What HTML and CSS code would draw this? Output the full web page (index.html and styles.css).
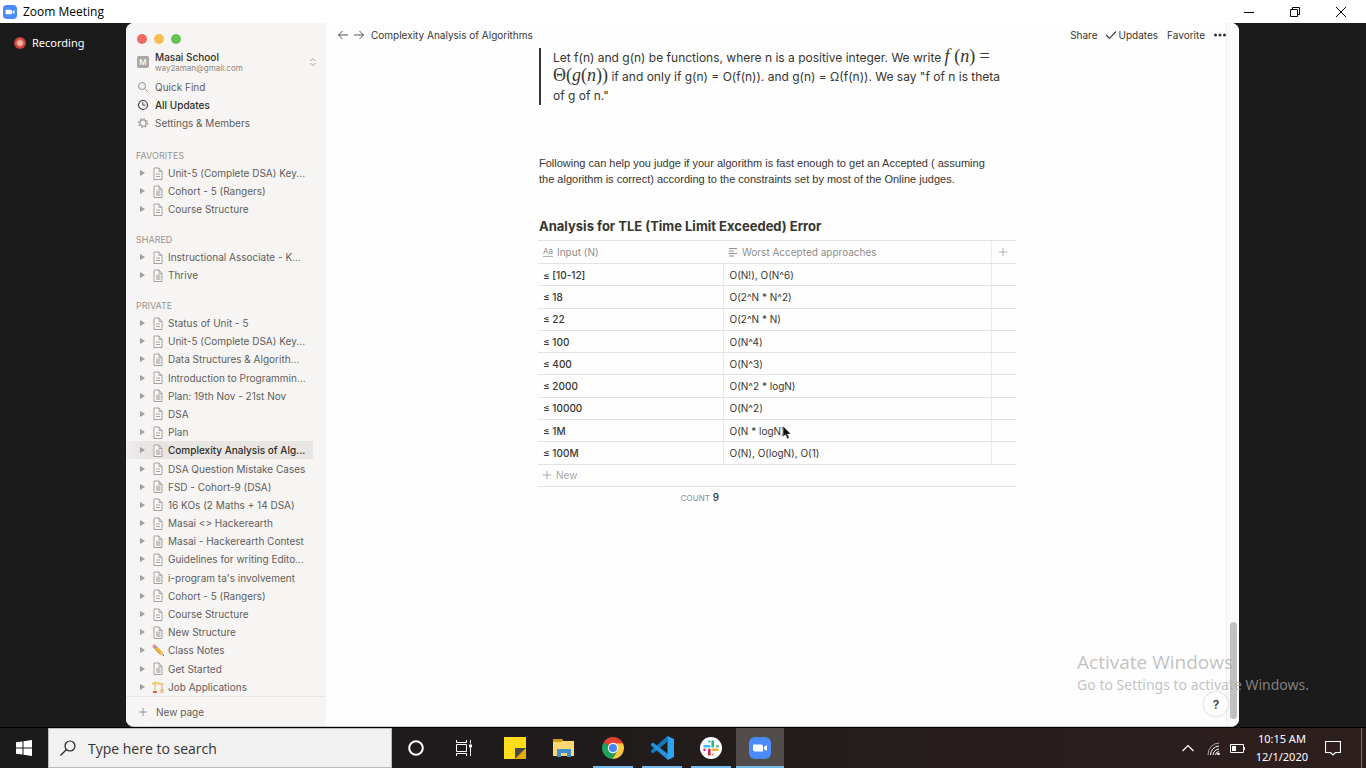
FILE: index.html
```html
<!DOCTYPE html>
<html lang="en">
<head>
<meta charset="utf-8">
<title>Zoom Meeting</title>
<link rel="stylesheet" href="styles.css">
<script src="app.js" defer></script>
</head>
<body>
<svg class="defs" aria-hidden="true">
  <symbol id="doc" viewBox="0 0 10 13"><path d="M1 1h5l3 3.500v8H1z" fill="#fbfaf9" stroke="#a3a19d"/><path d="M6 1v3.500h3M3 7h4M3 9.500h4" fill="none" stroke="#a3a19d"/></symbol>
  <symbol id="docfull" viewBox="0 0 10 13"><path d="M1 1h5l3 3.500v8H1z" fill="#fbfaf9" stroke="#a3a19d"/><path d="M6 1v3.500h3" fill="none" stroke="#a3a19d"/><path d="M3 5.500h4.500V11H3z" fill="#c9c6c2"/></symbol>
  <symbol id="pencil" viewBox="0 0 12 12"><path d="M0 2.500L2.500 0l2.800 2.800-2.500 2.500z" fill="#e58fa0"/><path d="M2.600 5.100l2.500-2.500L10.500 8 8 10.500z" fill="#f5b82e"/><path d="M2 4.500L4.500 2l1 1L3 5.500z" fill="#9a9da0"/><path d="M3.800 5.800L8.600 10.500" stroke="#d18b1c" fill="none"/><path d="M8 10.500L10.500 8l1.500 4z" fill="#e0bd84"/><path d="M10.800 11.400l.8-.8.4 1.400z" fill="#333"/></symbol>
  <symbol id="crane" viewBox="0 0 12 12"><path d="M0 3h12M3 1v10M3 1l8 2M3 1L0 3" stroke="#ecc765" stroke-width="1.200" fill="none"/><path d="M10 3v6M8 11h4" stroke="#d7a76a" fill="none"/><path d="M1 11h4" stroke="#d9634c" stroke-width="2"/><path d="M8.500 8h3v2h-3z" fill="#e6b584"/></symbol>
  <symbol id="zoomcam" viewBox="0 0 22 22"><rect width="22" height="22" rx="6" fill="#4a8cff"/><path d="M4 7.500h8q2 0 2 2v5H6q-2 0-2-2zM15 10l3-2v6l-3-2z" fill="#fff"/></symbol>
</svg>

<header class="titlebar">
  <svg class="title-logo"><use href="#zoomcam"/></svg>
  <span class="title">Zoom Meeting</span>
  <button class="win-btn" aria-label="Minimize"><svg viewBox="0 0 12 12"><path d="M1 6.500h10" stroke="#000"/></svg></button>
  <button class="win-btn" aria-label="Restore"><svg viewBox="0 0 12 12"><path d="M1.500 3.500h7v7h-7zM3.500 3.500v-2h7v7h-2" fill="none" stroke="#000"/></svg></button>
  <button class="win-btn" aria-label="Close"><svg viewBox="0 0 12 12"><path d="M1 1l10 10M11 1L1 11" stroke="#000"/></svg></button>
</header>

<div class="stage">
  <div class="side-left"><span class="rec-dot"></span><span>Recording</span></div>

  <div class="window">
    <aside class="sidebar">
      <div class="lights"><i class="red"></i><i class="yellow"></i><i class="green"></i></div>
      <button class="workspace">
        <span class="badge">M</span>
        <span class="ws-text"><b>Masai School</b><small>way2aman@gmail.com</small></span>
        <svg class="updown" viewBox="0 0 8 10"><path d="M1.500 4L4 1.500 6.500 4M1.500 6L4 8.500 6.500 6" fill="none" stroke="#a5a3a0"/></svg>
      </button>
      <nav class="nav">
        <a href="#"><svg viewBox="0 0 12 12"><circle cx="5" cy="5" r="3.500" fill="none" stroke="#96948f"/><path d="M7.500 7.500l3.500 3.500" stroke="#96948f"/></svg>Quick Find</a>
        <a href="#" class="strong"><svg viewBox="0 0 12 12"><circle cx="6" cy="6" r="4.500" fill="none" stroke="#444" stroke-width="1.200"/><path d="M5.800 3.200v3h2.700" fill="none" stroke="#444"/></svg>All Updates</a>
        <a href="#"><svg viewBox="0 0 12 12"><circle cx="6" cy="6" r="3.200" fill="none" stroke="#96948f" stroke-width="1.200"/><circle cx="6" cy="6" r="4.500" fill="none" stroke="#96948f" stroke-width="1.200" stroke-dasharray="1.500 2.034"/></svg>Settings &amp; Members</a>
      </nav>
      <h2>FAVORITES</h2>
      <ul class="pages" data-pages="doc:Unit-5 (Complete DSA) Key...|docfull:Cohort - 5 (Rangers)|doc:Course Structure"></ul>
      <h2>SHARED</h2>
      <ul class="pages" data-pages="doc:Instructional Associate - K...|docfull:Thrive"></ul>
      <h2>PRIVATE</h2>
      <ul class="pages fill" data-pages="doc:Status of Unit - 5|doc:Unit-5 (Complete DSA) Key...|docfull:Data Structures &amp; Algorith...|doc:Introduction to Programmin...|docfull:Plan: 19th Nov - 21st Nov|doc:DSA|doc:Plan|docfull:Complexity Analysis of Alg...|doc:DSA Question Mistake Cases|docfull:FSD - Cohort-9 (DSA)|doc:16 KOs (2 Maths + 14 DSA)|doc:Masai &lt;&gt; Hackerearth|docfull:Masai - Hackerearth Contest|doc:Guidelines for writing Edito...|docfull:i-program ta's involvement|doc:Cohort - 5 (Rangers)|doc:Course Structure|docfull:New Structure|pencil:Class Notes|docfull:Get Started|crane:Job Applications"></ul>
      <button class="newpage"><svg viewBox="0 0 10 10"><path d="M5 1v8M1 5h8" stroke="#96948f"/></svg>New page</button>
    </aside>

    <main class="main">
      <div class="topbar">
        <button aria-label="Back"><svg viewBox="0 0 12 10"><path d="M11 5H1.500M5.500 1l-4 4 4 4" fill="none" stroke="#55534f"/></svg></button>
        <button aria-label="Forward"><svg viewBox="0 0 12 10"><path d="M1 5h9.500M6.500 1l4 4-4 4" fill="none" stroke="#55534f"/></svg></button>
        <span class="crumb">Complexity Analysis of Algorithms</span>
        <button>Share</button>
        <button class="updates"><svg viewBox="0 0 12 10"><path d="M1 5l3.500 3.500L11 1.500" fill="none" stroke="#444" stroke-width="1.200"/></svg>Updates</button>
        <button class="fav">Favorite</button>
        <button aria-label="More"><svg viewBox="0 0 12 10"><g fill="#333"><circle cx="1.500" cy="5" r="1.500"/><circle cx="6" cy="5" r="1.500"/><circle cx="10.500" cy="5" r="1.500"/></g></svg></button>
      </div>
      <article class="doc">
        <blockquote>Let f(n) and g(n) be functions, where n is a positive integer. We write <span class="math"><i>f</i> (<i>n</i>) =</span><br><span class="math">Θ(<i>g</i>(<i>n</i>))</span> if and only if g(n) = O(f(n)). and g(n) = Ω(f(n)). We say "f of n is theta<br>of g of n."</blockquote>
        <p>Following can help you judge if your algorithm is fast enough to get an Accepted ( assuming<br>the algorithm is correct) according to the constraints set by most of the Online judges.</p>
        <h1>Analysis for TLE (Time Limit Exceeded) Error</h1>
        <table>
          <colgroup><col class="c1"><col><col class="c3"></colgroup>
          <thead><tr>
            <th><span class="th"><span class="aa">Aa</span>Input (N)</span></th>
            <th><span class="th"><svg viewBox="0 0 10 10"><path d="M1 1.500h8M1 4h5M1 6.500h8M1 9h5" stroke="#8f8d89"/></svg>Worst Accepted approaches</span></th>
            <th class="add"><button aria-label="Add column"><svg viewBox="0 0 8 8"><path d="M4 0v8M0 4h8" stroke="#b3b1ae"/></svg></button></th>
          </tr></thead>
          <tbody>
            <tr><td>≤ [10-12]</td><td>O(N!), O(N^6)</td><td></td></tr>
            <tr><td>≤ 18</td><td>O(2^N * N^2)</td><td></td></tr>
            <tr><td>≤ 22</td><td>O(2^N * N)</td><td></td></tr>
            <tr><td>≤ 100</td><td>O(N^4)</td><td></td></tr>
            <tr><td>≤ 400</td><td>O(N^3)</td><td></td></tr>
            <tr><td>≤ 2000</td><td>O(N^2 * logN)</td><td></td></tr>
            <tr><td>≤ 10000</td><td>O(N^2)</td><td></td></tr>
            <tr><td>≤ 1M</td><td><span class="pointed">O(N * logN)<svg class="cursor" viewBox="0 0 10 15"><path d="M1 1v11l2.500-2.300L5.300 14l2-.9-1.800-4H9z" fill="#111" stroke="#eee" stroke-width=".6"/></svg></span></td><td></td></tr>
            <tr><td>≤ 100M</td><td>O(N), O(logN), O(1)</td><td></td></tr>
            <tr class="new"><td colspan="3"><button><svg viewBox="0 0 8 8"><path d="M4 0v8M0 4h8" stroke="#aaa8a5"/></svg>New</button></td></tr>
          </tbody>
        </table>
        <div class="count"><span>COUNT</span> <b>9</b></div>
      </article>
      <button class="help" aria-label="Help">?</button>
    </main>
    <div class="gutter"><div class="thumb"></div></div>
  </div>

  <div class="side-right"></div>
  <div class="watermark"><strong>Activate Windows</strong><span>Go to Settings to activate Windows.</span></div>
</div>

<footer class="taskbar">
  <button class="start" aria-label="Start"><svg viewBox="0 0 16 16"><path d="M0 2.300L6.500 1.400V7.500H0zM7.500 1.200L16 0v7.500H7.500zM0 8.500h6.500v6.100L0 13.700zM7.500 8.500H16V16l-8.500-1.200z" fill="#fff"/></svg></button>
  <label class="search"><svg viewBox="0 0 16 16"><circle cx="10" cy="6" r="5" fill="none" stroke="#222" stroke-width="1.200"/><path d="M6.500 9.500L.5 15.500" stroke="#222" stroke-width="1.300"/></svg><input type="text" placeholder="Type here to search" aria-label="Search"></label>
  <button class="tool" aria-label="Cortana"><svg viewBox="0 0 16 16"><circle cx="8" cy="8" r="6.800" fill="none" stroke="#fff" stroke-width="2"/></svg></button>
  <button class="tool" aria-label="Task View"><svg viewBox="0 0 16 16"><path d="M.5 0v2.500h10V0M.5 16v-2.500h10V16M.5 4.500h10v7H.5zM14.500 0v3.500M14.500 8v8" fill="none" stroke="#fff"/><path d="M13 4.500h3v3h-3z" fill="#fff"/></svg></button>
  <div class="apps">
    <button aria-label="Sticky Notes"><svg viewBox="0 0 22 22"><path d="M0 0h22v11L11 22H0z" fill="#ffdc1a"/><path d="M11 11h11L11 22z" fill="#484848"/><path d="M22 11v11H11z" fill="#eaac00"/></svg></button>
    <button aria-label="File Explorer"><svg viewBox="0 0 22 22"><path d="M0 2h9l1 2h11v15H0z" fill="#f4c34c"/><path d="M0 2h9l1 2-1 1H0z" fill="#d69b12"/><path d="M0 5h9l1-1h11v15H0z" fill="#ffd873"/><path d="M4 12h14v8h-4v-4H8v4H4z" fill="#3f90cf"/></svg></button>
    <button class="open" aria-label="Chrome"><svg viewBox="0 0 22 22"><path d="M11 11L1.500 5.500A11 11 0 0 1 20.500 5.500z" fill="#e34133"/><path d="M11 11L1.500 5.500A11 11 0 0 0 10.500 22L15.300 13.500z" fill="#1fa15d"/><path d="M11 6h9.800A11 11 0 0 1 10.500 22L15.500 13.500z" fill="#fcca3f"/><path d="M2 5h18.500l.6 1.500H11z" fill="#e34133"/><circle cx="11" cy="11" r="5.200" fill="#fff"/><circle cx="11" cy="11" r="4" fill="#4285f4"/></svg></button>
    <button class="open" aria-label="Visual Studio Code"><svg class="wide" viewBox="0 0 24 24"><path d="M18 0l-1 6L3 17.500 1 16v-1.500L17 .5z" fill="#1279bf"/><path d="M1 8l2-1.500L18 18v6L1 9.500z" fill="#2492dc"/><path d="M17.500 0L24 3v18l-6.500 3z" fill="#2ba5ee"/></svg></button>
    <button class="open" aria-label="Slack"><svg viewBox="0 0 22 22"><circle cx="11" cy="11" r="11" fill="#fff"/><g fill="none" stroke-width="2.600" stroke-linecap="round"><path d="M9.300 4.500v0M4.500 9.300h4.800" stroke="#36c5f0"/><path d="M17.500 9.300v0M12.700 4.500v4.800" stroke="#2eb67d"/><path d="M12.700 17.500v0M12.700 12.700h4.800" stroke="#ecb22e"/><path d="M4.500 12.700v0M9.300 12.700v4.800" stroke="#e01e5a"/></g></svg></button>
    <button class="open active" aria-label="Zoom"><svg><use href="#zoomcam"/></svg></button>
  </div>
  <div class="tray">
    <svg viewBox="0 0 14 14"><path d="M1.500 10L7 4.500l5.500 5.500" fill="none" stroke="#fff" stroke-width="1.200"/></svg>
    <svg viewBox="0 0 14 14"><g fill="none" stroke="#fff"><path d="M2 14A11.500 11.500 0 0 1 13 2" stroke="#aaa"/><path d="M4.500 14A9 9 0 0 1 13 5M7 14a6.500 6.500 0 0 1 6-6M9.500 14A4 4 0 0 1 13 10.500"/></g><circle cx="12.500" cy="13" r="1.300" fill="#fff"/></svg>
    <svg class="battery" viewBox="0 0 15 14"><path d="M.5 3.500h13v8H.5zM14.500 6v3" fill="none" stroke="#fff"/><path d="M2 5h4v5H2z" fill="#fff"/></svg>
    <time class="clock"><span>10:15 AM</span><span>12/1/2020</span></time>
    <button class="note" aria-label="Notifications"><svg viewBox="0 0 16 16"><path d="M.5 1.500h15v11h-5L8 15l-2.500-2.500h-5z" fill="none" stroke="#fff" stroke-width="1.200"/></svg></button>
  </div>
</footer>
</body>
</html>
```
FILE: app.js
```js
document.querySelectorAll("[data-pages]").forEach(function (list) {
  list.dataset.pages.split("|").forEach(function (entry) {
    var cut = entry.indexOf(":");
    var icon = entry.slice(0, cut);
    var li = document.createElement("li");
    var link = document.createElement("a");
    link.href = "#";
    link.innerHTML = '<i class="tri"></i><svg class="' + (icon.indexOf("doc") === 0 ? "ic" : "ic emoji") + '"><use href="#' + icon + '"/></svg>';
    var name = document.createElement("span");
    name.textContent = entry.slice(cut + 1);
    link.appendChild(name);
    if (name.textContent.indexOf("Complexity") === 0) link.className = "current";
    li.appendChild(link);
    list.appendChild(li);
  });
});
```
FILE: styles.css
```css
* { box-sizing: border-box; }
body {
  margin: 0;
  height: 100vh;
  display: flex;
  flex-direction: column;
  overflow: hidden;
  font-family: Inter, "Liberation Sans", sans-serif;
  background: #1b1b1b;
  color: #37352f;
}
button { border: 0; padding: 0; margin: 0; background: none; font: inherit; color: inherit; }
a { color: inherit; text-decoration: none; }
svg { display: block; flex: none; }
.defs { position: absolute; width: 0; height: 0; }

.titlebar { display: flex; align-items: center; height: 23px; flex: none; background: #fff; padding: 0 2px 0 3px; }
.title-logo { width: 14px; height: 14px; }
.title { flex: 1; margin-left: 6px; font: 12px "Open Sans", "Noto Sans", sans-serif; color: #000; }
.win-btn { width: 46px; height: 20px; display: flex; justify-content: center; align-items: center; }
.win-btn svg { width: 12px; height: 12px; }

.stage { position: relative; flex: 1; display: flex; min-height: 0; border-bottom: 1px solid #000; }
.side-left { width: 126px; flex: none; display: flex; align-items: center; align-self: flex-start; gap: 6px; padding: 12px 14px; font: 11px/16px "Noto Sans", "Open Sans", sans-serif; color: #fff; }
.rec-dot { width: 12px; height: 12px; border-radius: 50%; background: radial-gradient(ellipse at center, #f3b0a6 0 25%, #cf4539 50%, #8d3029 100%); }
.side-right { width: 127px; flex: none; }
.window { flex: 1; display: flex; min-width: 0; background: #fefefe; border-radius: 8px; border-bottom: 1px solid #ccc; overflow: hidden; }

.sidebar { width: 200px; flex: none; display: flex; flex-direction: column; padding-top: 11px; background: linear-gradient(90deg, #f4f4f7 0, #f7f5f4 24px); color: #5f5c58; font-size: 10px; }
.lights { display: flex; gap: 7px; padding-left: 11px; }
.lights i { width: 10px; height: 10px; border-radius: 50%; }
.red { background: #ee6a66; }
.yellow { background: #f5bf4f; }
.green { background: #61c554; }
.workspace { display: flex; align-items: center; height: 24px; margin-top: 6px; padding: 0 9px 0 11px; text-align: left; }
.badge { width: 12px; height: 12px; border-radius: 2px; background: #a9a7a4; color: #fff; font-size: 8px; font-weight: 500; line-height: 12px; text-align: center; }
.ws-text { flex: 1; display: flex; flex-direction: column; padding-left: 6px; }
.ws-text b { font-size: 10px; line-height: 12px; font-weight: 500; color: #2f2d28; }
.ws-text small { font-size: 8px; line-height: 10px; color: #8a8783; }
.updown { width: 8px; height: 10px; }
.nav { display: flex; flex-direction: column; margin-top: 4px; padding-bottom: 2px; }
.nav a { display: flex; align-items: center; gap: 6px; height: 18px; padding-left: 11px; }
.nav svg { width: 12px; height: 12px; }
.nav .strong { color: #2f2d28; font-weight: 500; }
.sidebar h2 { margin: 16px 0 2px 10px; font-size: 9px; line-height: 12px; font-weight: 400; color: #96948f; }
.pages { list-style: none; margin: 0; padding: 0; }
.pages.fill { flex: 1; display: flex; flex-direction: column; justify-content: space-between; }
.pages a { display: flex; align-items: center; height: 18px; margin-right: 13px; padding-left: 14px; white-space: nowrap; }
.tri { width: 0; height: 0; border: 3px solid transparent; border-left: 5px solid #a09e9b; border-right: 0; margin-right: 7px; }
.ic { width: 10px; height: 13px; margin: 0 5px 0 1px; }
.emoji { width: 12px; height: 12px; margin: 0 4px 0 0; }
.pages .current { background: linear-gradient(90deg, #efeef0, #e8e5e3 16px); color: #2f2d28; font-weight: 500; }
.newpage { display: flex; align-items: center; gap: 8px; height: 30px; padding-left: 12px; border-top: 1px solid #e8e6e4; }
.newpage svg { width: 10px; height: 10px; }

.main { position: relative; flex: 1; min-width: 0; }
.topbar { display: flex; align-items: center; height: 25px; padding: 0 0 1px 11px; font-size: 10px; }
.topbar svg { width: 12px; height: 10px; }
.topbar button { display: flex; align-items: center; margin-right: 4px; }
.topbar .crumb { flex: 1; margin-left: 2px; }
.topbar .crumb + button { margin-right: 7px; }
.topbar .updates { gap: 2px; margin-right: 9px; }
.topbar .fav { margin-right: 9px; }
.topbar button:last-child { margin-right: 0; }

.doc { max-width: 480px; margin: 0 auto; padding-left: 2px; }
blockquote { margin: 0 0 0 1px; padding-left: 12px; border-left: 2px solid #37352f; font-size: 12px; line-height: 19px; white-space: nowrap; }
.math { font-family: "Liberation Serif", serif; font-size: 18px; line-height: 0; }
.doc p { margin: 50px 0 0 1px; font-family: "Liberation Sans", sans-serif; font-size: 11px; line-height: 16px; white-space: nowrap; }
.doc h1 { margin: 30px 0 5px 1px; font-size: 13px; line-height: 18px; font-weight: 700; }
table { width: 100%; height: 247px; table-layout: fixed; border-collapse: collapse; font-size: 10px; }
.c1 { width: 185px; }
.c3 { width: 25px; }
th, td { padding: 0 5px; border-top: 1px solid #e4e3e1; border-bottom: 1px solid #e4e3e1; text-align: left; }
td { line-height: 12px; }
td + td { padding-left: 6px; }
td + td, th.add { border-left: 1px solid #ebeae8; }
td:first-child { font-weight: 500; }
th { height: 23px; font-weight: 400; color: #8f8d89; }
.th { display: flex; align-items: center; gap: 4px; }
.th svg { width: 10px; height: 10px; }
.aa { font-size: 8px; line-height: 9px; border-bottom: 1px solid #b3b1ae; }
.add { padding: 0 7px; }
.add svg, .new svg { width: 8px; height: 8px; }
.new button { display: flex; align-items: center; gap: 5px; font-weight: 400; color: #aaa8a5; }
.pointed { position: relative; }
.cursor { position: absolute; left: 100%; top: 0; width: 10px; height: 15px; margin-left: -3px; }
.count { width: 181px; padding-top: 3px; text-align: right; font-size: 10px; line-height: 14px; }
.count span { font-size: 8px; color: #8f8d89; }
.count b { font-weight: 500; }
.help { position: absolute; right: -2px; bottom: 10px; width: 24px; height: 24px; border-radius: 50%; background: #fff; box-shadow: 0 0 3px #bbb; font-size: 12px; font-weight: 600; z-index: 1; }
.gutter { width: 13px; flex: none; display: flex; justify-content: center; align-items: flex-end; padding-bottom: 7px; background: #fafafa; border-left: 1px solid #eee; }
.thumb { width: 7px; height: 14%; border-radius: 4px; background: #c1c1c1; }

.watermark { position: absolute; right: 57px; bottom: 32px; display: flex; flex-direction: column; color: #aaaaaab8; font: 14px/20px "Noto Sans", "Open Sans", sans-serif; pointer-events: none; z-index: 2; }
.watermark strong { font: 19px/26px "Open Sans", "Noto Sans", sans-serif; }

.taskbar { display: flex; height: 40px; flex: none; background: linear-gradient(90deg, #1b1b1c 0, #211c1c 45%, #2e1f1e 100%); color: #fff; font-family: "Open Sans", "Noto Sans", sans-serif; }
.taskbar button { display: flex; justify-content: center; align-items: center; }
.start, .tool { width: 48px; }
.start svg, .tool svg { width: 16px; height: 16px; }
.search { display: flex; align-items: center; width: 344px; padding-left: 11px; gap: 12px; background: #f1f1f1; border: 1px solid #bbb; }
.search svg { width: 16px; height: 16px; }
.search input { flex: 1; min-width: 0; border: 0; padding: 0; outline: 0; background: none; font: 14px "Open Sans", "Noto Sans", sans-serif; }
.search input::placeholder { color: #333; opacity: 1; }
.apps { flex: 1; display: flex; gap: 1px; padding-left: 3px; }
.apps button { width: 48px; }
.apps svg { width: 22px; height: 22px; }
.apps .wide { width: 24px; height: 24px; }
.apps .open { background: linear-gradient(#76b9ed, #76b9ed) center bottom / 40px 2px no-repeat; }
.apps .active { background: linear-gradient(#76b9ed, #76b9ed) center bottom / 48px 2px no-repeat, #514b4a; }
.tray { display: flex; align-items: center; gap: 11px; padding-right: 4px; }
.tray svg { width: 14px; height: 14px; }
.tray .battery { width: 15px; margin-left: -1px; }
.clock { display: flex; flex-direction: column; align-items: center; font: 11px/18px "Noto Sans", "Open Sans", sans-serif; white-space: nowrap; }
.note { height: 40px; padding-right: 20px; padding-left: 6px; border-right: 1px solid #776d6c; }
.tray .note svg { width: 16px; height: 16px; }
```
